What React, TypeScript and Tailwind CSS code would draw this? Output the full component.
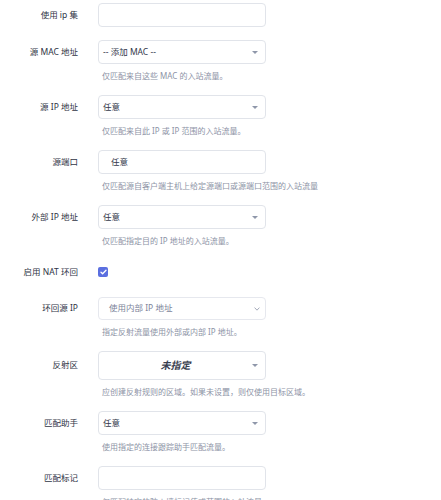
import React from "react";

type Field = {
  label: string;
  kind: "text" | "select" | "native" | "zone" | "check";
  value?: string;
  help?: string;
};

const fields: Field[] = [
  { label: "使用 ip 集", kind: "text" },
  { label: "源 MAC 地址", kind: "select", value: "-- 添加 MAC --", help: "仅匹配来自这些 MAC 的入站流量。" },
  { label: "源 IP 地址", kind: "select", value: "任意", help: "仅匹配来自此 IP 或 IP 范围的入站流量。" },
  { label: "源端口", kind: "text", value: "任意", help: "仅匹配源自客户端主机上给定源端口或源端口范围的入站流量" },
  { label: "外部 IP 地址", kind: "select", value: "任意", help: "仅匹配指定目的 IP 地址的入站流量。" },
  { label: "启用 NAT 环回", kind: "check" },
  { label: "环回源 IP", kind: "native", value: "使用内部 IP 地址", help: "指定反射流量使用外部或内部 IP 地址。" },
  { label: "反射区", kind: "zone", value: "未指定", help: "应创建反射规则的区域。如果未设置，则仅使用目标区域。" },
  { label: "匹配助手", kind: "select", value: "任意", help: "使用指定的连接跟踪助手匹配流量。" },
  { label: "匹配标记", kind: "text", help: "仅匹配特定的防火墙标记值或范围的入站流量。" },
];

function Caret() {
  return (
    <svg width="6" height="3" viewBox="0 0 6 3" className="shrink-0">
      <path d="M0 0h6L3 3z" fill="#8f97aa" />
    </svg>
  );
}

function Control({ f }: { f: Field }) {
  if (f.kind === "check") {
    return (
      <div className="flex h-6 items-center">
        <span className="grid h-[10px] w-[10px] place-items-center rounded-[2px] bg-[#5b6fe0]">
          <svg width="7" height="6" viewBox="0 0 7 6">
            <path d="M1 3.2l1.6 1.5L6 1.2" stroke="#fff" strokeWidth="1.3" fill="none" strokeLinecap="round" strokeLinejoin="round" />
          </svg>
        </span>
      </div>
    );
  }
  if (f.kind === "text") {
    return (
      <div className="flex h-6 w-[168px] items-center rounded-[4px] border border-[#e1e4ea] bg-white px-3 text-[#33384a]">
        {f.value}
      </div>
    );
  }
  if (f.kind === "native") {
    return (
      <div className="flex h-[23px] w-[168px] items-center justify-between rounded-[4px] border border-[#e6e8ee] bg-white pl-[10px] pr-[5px] text-[#7d849a]">
        <span>{f.value}</span>
        <svg width="6" height="4" viewBox="0 0 6 4">
          <path d="M0.6 0.6L3 3.2 5.4 0.6" stroke="#9aa0b2" strokeWidth="0.9" fill="none" />
        </svg>
      </div>
    );
  }
  if (f.kind === "zone") {
    return (
      <div className="flex h-[29px] w-[168px] items-center rounded-[4px] border border-[#e1e4ea] bg-white pr-[7px]">
        <span className="flex-1 text-center text-[10px] font-bold italic text-[#3a3f50]">{f.value}</span>
        <Caret />
      </div>
    );
  }
  return (
    <div className="flex h-6 w-[168px] items-center justify-between rounded-[4px] border border-[#e1e4ea] bg-white pl-[4px] pr-[7px] text-[#33384a]">
      <span>{f.value}</span>
      <Caret />
    </div>
  );
}

export default function App() {
  return (
    <div className="min-h-[500px] w-[441px] overflow-hidden bg-white pt-[3px] text-[8.5px] font-['Noto_Sans','Noto_Sans_CJK_SC',sans-serif]">
      {fields.map((f) => (
        <div key={f.label} className={f.help ? "mb-[14px]" : "mb-[13px]"}>
          <div className="flex items-center gap-5">
            <div className="w-[78px] shrink-0 text-right text-[#2f3445]">{f.label}</div>
            <Control f={f} />
          </div>
          {f.help && (
            <p className="mt-[6px] whitespace-nowrap pl-[102px] text-[8px] leading-[11px] text-[#8d93a6]">{f.help}</p>
          )}
        </div>
      ))}
    </div>
  );
}
